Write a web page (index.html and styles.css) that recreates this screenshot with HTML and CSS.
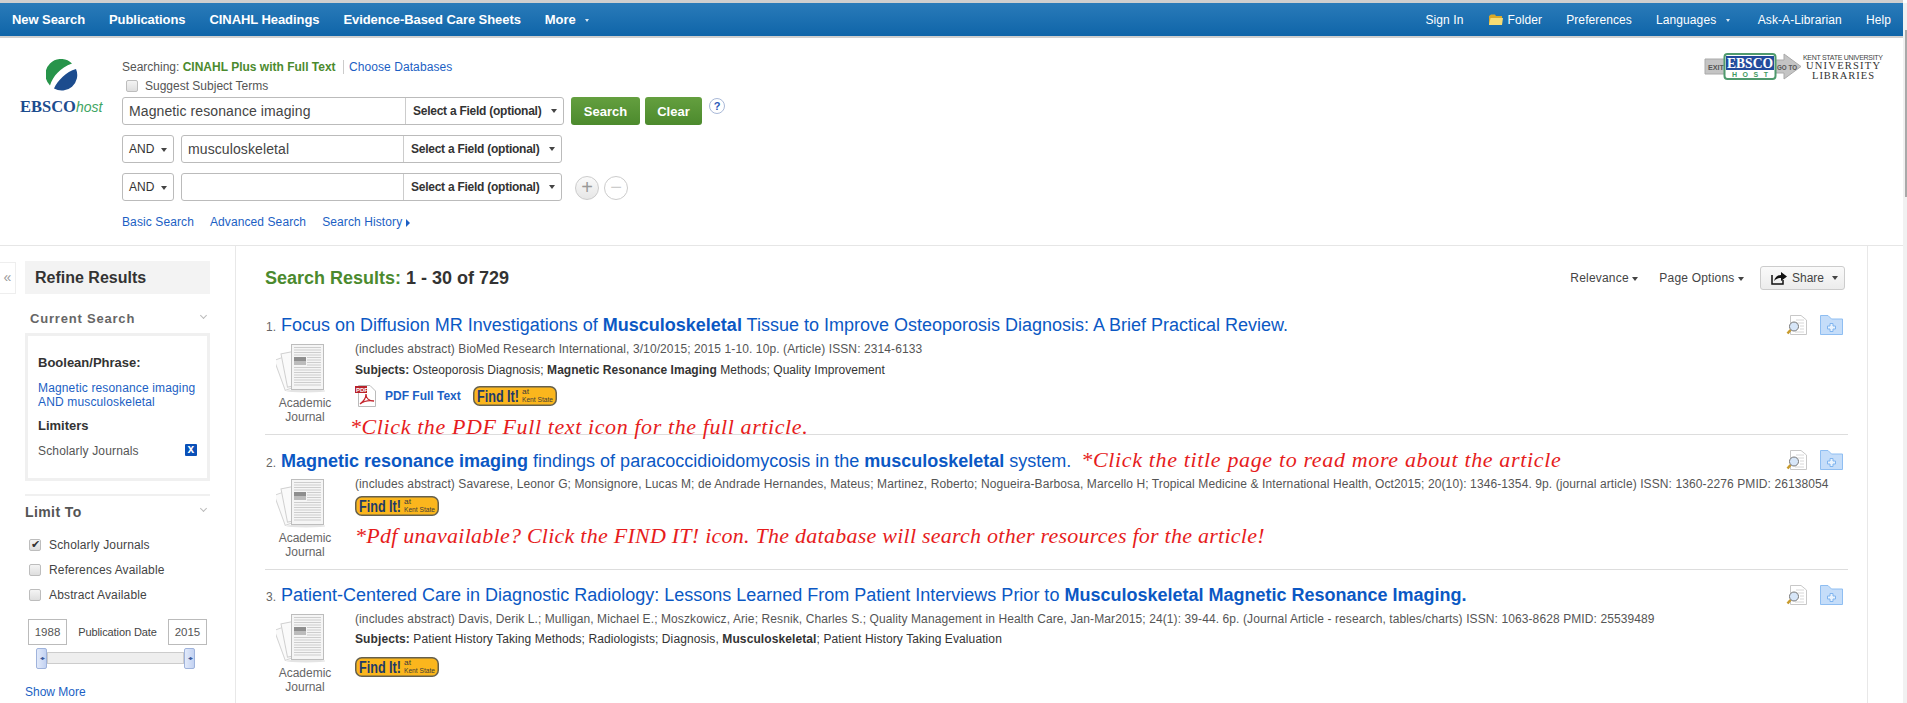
FILE: index.html
```html
<!DOCTYPE html>
<html lang="en">
<head>
    <meta charset="UTF-8">
    <title>EBSCOhost: Result List</title>
    <link rel="stylesheet" href="styles.css">
</head>
<body>

<svg class="defs" xmlns="http://www.w3.org/2000/svg">
    <symbol id="thumb" viewBox="0 0 49 49">
        <rect x="3" y="11" width="26" height="32" transform="rotate(-20 16 27)" fill="#fafafa" stroke="#d4d4d4"/>
        <rect x="8" y="7" width="26" height="34" transform="rotate(-11 21 24)" fill="#fafafa" stroke="#d0d0d0"/>
        <ellipse cx="30" cy="47" rx="20" ry="1.5" fill="#e4e4e4"/>
        <rect x="15.5" y="0.5" width="32" height="45" fill="#f5f5f5" stroke="#bdbdbd"/>
        <path d="M18 3.5H45M18 6H45M18 8.500H45M18 11H45M31 13.500H45M31 16H45M31 18.500H45M31 21H45M18 23.500H45M18 26H45M18 28.500H45M18 31H45M18 33.500H45M18 36H45M18 38.500H45M18 41H45" stroke="#cdcdcd"/>
        <rect x="18" y="13" width="12" height="4" fill="#8e8e8e"/>
        <rect x="18" y="17" width="12" height="4" fill="#bcbcbc"/>
    </symbol>
    <symbol id="preview" viewBox="0 0 21 20">
        <path d="M4.500 .5H15L20.500 5V19.500H4.500Z" fill="#fff" stroke="#c8c8c8"/>
        <path d="M10 5H18M10 8H18M14 11H18M14 14H18M9 17H18" stroke="#d8d8d8"/>
        <path d="M4.500 15L1.500 18.500" stroke="#c79a2c" stroke-width="2.500"/>
        <circle cx="8" cy="11.500" r="4.500" fill="#d7e6f8" stroke="#777"/>
    </symbol>
    <symbol id="folder-add" viewBox="0 0 23 20">
        <path d="M.5 .5H8L11.500 4H22.500V19.500H.5Z" fill="#c5ddf9" stroke="#8fbef2"/>
        <path d="M10 8.500H13V11H15.500V14H13V16.500H10V14H7.500V11H10Z" fill="#eaf3fd" stroke="#7fb4ef"/>
    </symbol>
    <symbol id="find-it" viewBox="0 0 84 20">
        <rect x=".75" y=".75" width="82.500" height="18.500" rx="6" fill="#fbb61d" stroke="#66604c" stroke-width="1.500"/>
        <text x="4" y="15.500" class="find-big" textLength="42" lengthAdjust="spacingAndGlyphs">Find It!</text>
        <text x="49" y="8" class="find-small" textLength="7" lengthAdjust="spacingAndGlyphs">at</text>
        <text x="49" y="15.500" class="find-small" textLength="31" lengthAdjust="spacingAndGlyphs">Kent State</text>
    </symbol>
</svg>

<div class="page">
<div class="content">

    <!-- Top toolbar -->
    <nav class="topbar">
        <div class="topbar-left">
            <a>New Search</a>
            <a>Publications</a>
            <a>CINAHL Headings</a>
            <a>Evidence-Based Care Sheets</a>
            <a>More <i class="nav-caret"></i></a>
        </div>
        <div class="topbar-right">
            <a>Sign In</a>
            <a class="folder-link">
                <svg width="15" height="13" viewBox="0 0 15 13"><path d="M1 3L3 1.500H7L8 3H14V12H1Z" fill="#d9a928"/><path d="M1 12L2.500 5H15L14 12Z" fill="#f7dc74"/></svg>
                Folder
            </a>
            <a>Preferences</a>
            <a>Languages <i class="nav-caret"></i></a>
            <a>Ask-A-Librarian</a>
            <a>Help</a>
        </div>
    </nav>

    <!-- Search box -->
    <header class="search-area">
        <div class="logo">
            <svg width="32" height="33" viewBox="0 0 32 33">
                <path d="M4 26.500C7 17 14 9 26 4.500A15.500 15.500 0 0 0 4 26.500Z" fill="#27944a"/>
                <path d="M30 10C20 13 12 21 8 29.500A15.500 15.500 0 0 0 30 10Z" fill="#1c4c8e"/>
            </svg>
            <div class="logo-text">EBSCO<em>host</em></div>
        </div>
        <div class="search-form">
            <div class="searching-line">
                Searching: <b>CINAHL Plus with Full Text</b>
                <a class="choose-db">Choose Databases</a>
            </div>
            <label class="suggest"><input type="checkbox"> Suggest Subject Terms</label>

            <div class="field-row">
                <div class="field-box first">
                    <input type="text" value="Magnetic resonance imaging">
                    <div class="field-select">Select a Field (optional) <i class="caret"></i></div>
                </div>
                <button class="go-btn search-btn">Search</button>
                <button class="go-btn clear-btn">Clear</button>
                <span class="help-dot">?</span>
            </div>
            <div class="field-row">
                <div class="bool-select">AND <i class="caret"></i></div>
                <div class="field-box">
                    <input type="text" value="musculoskeletal">
                    <div class="field-select">Select a Field (optional) <i class="caret"></i></div>
                </div>
            </div>
            <div class="field-row">
                <div class="bool-select">AND <i class="caret"></i></div>
                <div class="field-box">
                    <input type="text">
                    <div class="field-select">Select a Field (optional) <i class="caret"></i></div>
                </div>
                <span class="round-btn plus">+</span>
                <span class="round-btn minus">&minus;</span>
            </div>

            <div class="search-links">
                <a>Basic Search</a>
                <a>Advanced Search</a>
                <a>Search History <i class="link-arrow"></i></a>
            </div>
        </div>

        <svg class="exit-banner" width="178" height="27" viewBox="0 0 178 27">
            <path d="M0 6H20V21H0Z" fill="#c4c4c4" stroke="#aaa"/>
            <text x="3" y="17" class="banner-grey" textLength="16" lengthAdjust="spacingAndGlyphs">EXIT</text>
            <path d="M70 7H79V1L96 13.500L79 26V20H70Z" fill="#c4c4c4" stroke="#aaa"/>
            <text x="72" y="17" class="banner-grey" textLength="20" lengthAdjust="spacingAndGlyphs">GO TO</text>
            <rect x="19.500" y="1" width="51" height="25" rx="3" fill="#fff" stroke="#4f9a6d" stroke-width="2"/>
            <rect x="21" y="3" width="48" height="14" fill="#234b9c"/>
            <text x="22" y="15" class="banner-ebsco" textLength="46" lengthAdjust="spacingAndGlyphs">EBSCO</text>
            <text x="27" y="24" class="banner-host" textLength="36">HOST</text>
            <text x="98" y="7" class="banner-kent" textLength="80">KENT STATE UNIVERSITY</text>
            <text x="101" y="16" class="banner-lib" textLength="74" lengthAdjust="spacing">UNIVERSITY</text>
            <text x="107" y="26" class="banner-lib" textLength="62" lengthAdjust="spacing">LIBRARIES</text>
        </svg>
    </header>

    <div class="columns">

        <!-- Refine panel -->
        <aside class="sidebar">
            <div class="collapse-tab">&laquo;</div>
            <div class="refine">
                <h3 class="refine-title">Refine Results</h3>

                <div class="panel-head current-head">Current Search <i class="chevron"></i></div>
                <div class="current-box">
                    <div class="box-label">Boolean/Phrase:</div>
                    <a class="box-query">Magnetic resonance imaging<br>AND musculoskeletal</a>
                    <div class="box-label limiters">Limiters</div>
                    <div class="limiter-row">Scholarly Journals <span class="x-btn">x</span></div>
                </div>

                <div class="panel-rule"></div>
                <div class="panel-head limit-head">Limit To <i class="chevron"></i></div>
                <label class="limit-check first"><input type="checkbox" checked> Scholarly Journals</label>
                <label class="limit-check"><input type="checkbox"> References Available</label>
                <label class="limit-check"><input type="checkbox"> Abstract Available</label>

                <div class="date-row">
                    <span class="date-box">1988</span>
                    <span class="date-label">Publication Date</span>
                    <span class="date-box">2015</span>
                </div>
                <div class="slider">
                    <span class="slider-handle"></span>
                    <span class="slider-track"></span>
                    <span class="slider-handle"></span>
                </div>
                <a class="show-more">Show More</a>
            </div>
        </aside>

        <!-- Results -->
        <main class="results">
            <div class="results-head">
                <h1><span>Search Results:</span> 1 - 30 of 729</h1>
                <div class="results-tools">
                    <a class="sort-link">Relevance <i class="caret"></i></a>
                    <a>Page Options <i class="caret"></i></a>
                    <button class="share-btn">
                        <svg width="17" height="14" viewBox="0 0 17 14"><path d="M2 4V13H13V9" fill="none" stroke="#111" stroke-width="1.500"/><path d="M4 10C5 6 8 4 11 4V1L17 5.500L11 10V7C8 7 6 8 4 10Z" fill="#111"/></svg>
                        Share <i class="caret"></i>
                    </button>
                </div>
            </div>

            <article class="result">
                <div class="result-title">
                    <span class="result-num">1.</span>
                    <a class="title-link">Focus on Diffusion MR Investigations of <b>Musculoskeletal</b> Tissue to Improve Osteoporosis Diagnosis: A Brief Practical Review.</a>
                    <div class="result-icons">
                        <svg width="21" height="20"><use href="#preview"/></svg>
                        <svg width="23" height="20"><use href="#folder-add"/></svg>
                    </div>
                </div>
                <div class="result-body">
                    <div class="pub-type">
                        <svg width="49" height="49"><use href="#thumb"/></svg>
                        <div>Academic<br>Journal</div>
                    </div>
                    <div class="result-info">
                        <div class="meta">(includes abstract) BioMed Research International, 3/10/2015; 2015 1-10. 10p. (Article) ISSN: 2314-6133</div>
                        <div class="subjects"><b>Subjects:</b> Osteoporosis Diagnosis; <b>Magnetic Resonance Imaging</b> Methods; Quality Improvement</div>
                        <div class="links-row">
                            <svg width="21" height="22" viewBox="0 0 21 22">
                                <path d="M3.500 .5H15L20.500 6V21.500H3.500Z" fill="#fff" stroke="#bbb"/>
                                <rect x="0" y="1" width="12" height="7" fill="#b8222a"/>
                                <text x="1" y="7" class="pdf-label">PDF</text>
                                <path d="M5 19C9 16 11 12 11 9C11 13 14 16 19 16C14 15 9 16 5 19Z" fill="none" stroke="#c4262e" stroke-width="1.300"/>
                            </svg>
                            <a class="pdf-link">PDF Full Text</a>
                            <svg class="find-badge" width="84" height="20"><use href="#find-it"/></svg>
                        </div>
                        <div class="note note-one">*Click the PDF Full text icon for the full article.</div>
                    </div>
                </div>
            </article>

            <article class="result">
                <div class="result-title">
                    <span class="result-num">2.</span>
                    <a class="title-link"><b>Magnetic resonance imaging</b> findings of paracoccidioidomycosis in the <b>musculoskeletal</b> system.</a>
                    <span class="note note-inline">*Click the title page to read more about the article</span>
                    <div class="result-icons">
                        <svg width="21" height="20"><use href="#preview"/></svg>
                        <svg width="23" height="20"><use href="#folder-add"/></svg>
                    </div>
                </div>
                <div class="result-body">
                    <div class="pub-type">
                        <svg width="49" height="49"><use href="#thumb"/></svg>
                        <div>Academic<br>Journal</div>
                    </div>
                    <div class="result-info">
                        <div class="meta">(includes abstract) Savarese, Leonor G; Monsignore, Lucas M; de Andrade Hernandes, Mateus; Martinez, Roberto; Nogueira-Barbosa, Marcello H; Tropical Medicine &amp; International Health, Oct2015; 20(10): 1346-1354. 9p. (journal article) ISSN: 1360-2276 PMID: 26138054</div>
                        <svg class="find-badge-tight" width="84" height="20"><use href="#find-it"/></svg>
                        <div class="note note-two">*Pdf unavailable? Click the FIND IT! icon. The database will search other resources for the article!</div>
                    </div>
                </div>
            </article>

            <article class="result">
                <div class="result-title">
                    <span class="result-num">3.</span>
                    <a class="title-link">Patient-Centered Care in Diagnostic Radiology: Lessons Learned From Patient Interviews Prior to <b>Musculoskeletal Magnetic Resonance Imaging.</b></a>
                    <div class="result-icons">
                        <svg width="21" height="20"><use href="#preview"/></svg>
                        <svg width="23" height="20"><use href="#folder-add"/></svg>
                    </div>
                </div>
                <div class="result-body">
                    <div class="pub-type">
                        <svg width="49" height="49"><use href="#thumb"/></svg>
                        <div>Academic<br>Journal</div>
                    </div>
                    <div class="result-info">
                        <div class="meta">(includes abstract) Davis, Derik L.; Mulligan, Michael E.; Moszkowicz, Arie; Resnik, Charles S.; Quality Management in Health Care, Jan-Mar2015; 24(1): 39-44. 6p. (Journal Article - research, tables/charts) ISSN: 1063-8628 PMID: 25539489</div>
                        <div class="subjects tight"><b>Subjects:</b> Patient History Taking Methods; Radiologists; Diagnosis, <b>Musculoskeletal</b>; Patient History Taking Evaluation</div>
                        <svg class="find-badge-low" width="84" height="20"><use href="#find-it"/></svg>
                    </div>
                </div>
            </article>
        </main>
    </div>
</div>

<div class="scrollbar"><div class="scroll-thumb"></div></div>
</div>

</body>
</html>
```

FILE: styles.css
```css
html, body {
    margin: 0;
    height: 703px;
    overflow: hidden;
}

body {
    font-family: "Liberation Sans", Arial, sans-serif;
    font-size: 12px;
    color: #555;
    background-color: white;
}

a {
    color: #1c5fc4;
    text-decoration: none;
}

i {
    font-style: normal;
}

.defs {
    display: none;
}

.page {
    display: flex;
    height: 703px;
}

.content {
    width: 1903px;
}

.scrollbar {
    width: 4px;
    margin-top: 3px;
    background-color: #f1f1f1;
}

.scroll-thumb {
    width: 2px;
    height: 167px;
    margin: 27px 0 0 2px;
    background-color: #a9a9a9;
}

/* top toolbar */
.topbar {
    display: flex;
    justify-content: space-between;
    align-items: center;
    height: 33px;
    padding: 0 12px;
    border-top: 3px solid #cfcfcf;
    border-bottom: 2px solid #cfcfcf;
    background: linear-gradient(#2a7bb9, #0f65a9);
}

.topbar a {
    color: white;
}

.topbar-left, .topbar-right {
    display: flex;
    align-items: center;
    gap: 24px;
}

.topbar-left {
    font-size: 13px;
    font-weight: bold;
    letter-spacing: -.07px;
}

.topbar-right {
    letter-spacing: .1px;
}

.folder-link {
    display: flex;
    align-items: center;
    gap: 5px;
}

.nav-caret {
    display: inline-block;
    margin: 0 4px 0 6px;
    vertical-align: middle;
    border-top: 3px solid #dde9f3;
    border-left: 2.5px solid transparent;
    border-right: 2.5px solid transparent;
}

/* search area */
.search-area {
    display: flex;
    height: 208px;
    box-sizing: border-box;
    padding-top: 21px;
    border-bottom: 1px solid #e6e6e6;
}

.logo {
    width: 122px;
    flex-shrink: 0;
}

.logo svg {
    display: block;
    margin-left: 46px;
}

.logo-text {
    margin: 5px 0 0 20px;
    font-family: "Liberation Serif", serif;
    font-size: 16.5px;
    font-weight: bold;
    color: #1c4c8e;
}

.logo-text em {
    font-family: "Liberation Sans", sans-serif;
    font-size: 14px;
    font-weight: normal;
    color: #3fa564;
}

.search-form {
    padding-top: 1px;
}

.searching-line {
    line-height: 14px;
}

.searching-line b {
    color: #4b8a2e;
}

.choose-db {
    margin-left: 4px;
    padding-left: 5px;
    border-left: 1px solid #ccc;
    letter-spacing: .08px;
}

.suggest {
    display: flex;
    align-items: center;
    gap: 7px;
    margin: 5px 0 4px 4px;
    line-height: 14px;
}

input[type="checkbox"] {
    appearance: none;
    position: relative;
    width: 12px;
    height: 12px;
    margin: 0;
    border: 1px solid #bdbdbd;
    border-radius: 2px;
    background: linear-gradient(#f4f4f4, #dedede);
}

input[type="checkbox"]:checked::after {
    content: "\2714";
    position: absolute;
    left: 1px;
    top: -2px;
    font-size: 11px;
    color: #333;
}

.field-row {
    display: flex;
    align-items: center;
    height: 28px;
    margin-bottom: 10px;
}

.field-box {
    display: flex;
    width: 381px;
    height: 28px;
    box-sizing: border-box;
    border: 1px solid #bbb;
    border-radius: 3px;
}

.field-box.first {
    width: 442px;
}

.field-box input {
    flex: 1;
    min-width: 0;
    padding: 0 6px;
    border: none;
    background: none;
    outline: none;
    font-family: inherit;
    font-size: 14px;
    letter-spacing: .1px;
    color: #444;
}

.field-select {
    display: flex;
    align-items: center;
    width: 158px;
    padding-left: 7px;
    box-sizing: border-box;
    border-left: 1px solid #ccc;
    font-weight: bold;
    letter-spacing: -.25px;
    color: #333;
    white-space: pre;
}

.caret {
    display: inline-block;
    margin-left: 3px;
    vertical-align: middle;
    border-top: 4px solid #444;
    border-left: 3.5px solid transparent;
    border-right: 3.5px solid transparent;
}

.field-select .caret {
    margin-left: 6px;
}

.bool-select {
    width: 52px;
    height: 28px;
    line-height: 26px;
    box-sizing: border-box;
    margin-right: 7px;
    padding-left: 6px;
    border: 1px solid #bbb;
    border-radius: 3px;
    color: #333;
}

.go-btn {
    height: 28px;
    margin-left: 7px;
    padding: 0;
    border: none;
    border-radius: 3px;
    background: linear-gradient(#649f3f, #4c8a2d);
    color: white;
    font-family: inherit;
    font-size: 13px;
    font-weight: bold;
}

.search-btn {
    width: 69px;
}

.clear-btn {
    width: 57px;
    margin-left: 5px;
}

.help-dot {
    width: 14px;
    height: 14px;
    margin: -10px 0 0 7px;
    border: 1px solid #a9b9d8;
    border-radius: 50%;
    line-height: 14px;
    text-align: center;
    font-size: 11px;
    font-weight: bold;
    color: #2a58b8;
}

.round-btn {
    width: 22px;
    height: 22px;
    margin: 2px 0 0 7px;
    border: 1px solid #ccc;
    border-radius: 50%;
    line-height: 21px;
    text-align: center;
    font-size: 20px;
    color: #999;
    background: linear-gradient(#fafafa, #e6e6e6);
}

.round-btn.plus {
    margin-left: 13px;
}

.round-btn.minus {
    margin-left: 5px;
    color: #ccc;
    background: white;
}

.search-links {
    display: flex;
    gap: 16px;
    margin-top: 14px;
    line-height: 14px;
    letter-spacing: .1px;
}

.link-arrow {
    display: inline-block;
    border-left: 4px solid #1c5fc4;
    border-top: 4px solid transparent;
    border-bottom: 4px solid transparent;
    vertical-align: -1px;
}

.exit-banner {
    margin: -6px 20px 0 auto;
    overflow: visible;
    font-family: "Liberation Sans", sans-serif;
}

.banner-grey {
    font-size: 8px;
    font-weight: bold;
    fill: #555;
}

.banner-ebsco {
    font-family: "Liberation Serif", serif;
    font-size: 15px;
    font-weight: bold;
    fill: white;
}

.banner-host {
    font-size: 7px;
    font-weight: bold;
    fill: #3f9a62;
}

.banner-kent {
    font-size: 7px;
    fill: #444;
}

.banner-lib {
    font-family: "Liberation Serif", serif;
    font-size: 10.5px;
    fill: #333;
}

/* columns under the search box */
.columns {
    display: flex;
    height: 457px;
}

.sidebar {
    display: flex;
    width: 235px;
    flex-shrink: 0;
    box-sizing: border-box;
    padding-top: 15px;
}

.collapse-tab {
    width: 15px;
    height: 30px;
    margin: 1px 9px 0 0;
    border: 1px solid #eee;
    border-left: none;
    line-height: 28px;
    text-align: center;
    font-size: 14px;
    color: #999;
}

.refine {
    width: 185px;
}

.refine-title {
    height: 33px;
    margin: 0;
    padding-left: 10px;
    line-height: 33px;
    background-color: #f3f3f3;
    font-size: 16px;
    color: #333;
}

.panel-head {
    display: flex;
    justify-content: space-between;
    line-height: 14px;
    font-weight: bold;
    color: #666;
}

.current-head {
    margin: 18px 0 7px;
    padding-left: 5px;
    font-size: 13px;
    letter-spacing: .8px;
}

.limit-head {
    margin-top: 9px;
    font-size: 14px;
    letter-spacing: .4px;
    color: #555;
}

.chevron {
    width: 4px;
    height: 4px;
    margin: 1px 4px 0 0;
    border-right: 1px solid #bbb;
    border-bottom: 1px solid #bbb;
    transform: rotate(45deg);
}

.current-box {
    height: 148px;
    box-sizing: border-box;
    padding: 20px 10px 0;
    border: 3px solid #f0f0f0;
    line-height: 14px;
}

.box-label {
    font-weight: bold;
    font-size: 13px;
    color: #333;
}

.box-query {
    display: block;
    margin-top: 11px;
    letter-spacing: .15px;
    white-space: nowrap;
}

.limiters {
    margin-top: 10px;
}

.limiter-row {
    display: flex;
    justify-content: space-between;
    margin-top: 11px;
    letter-spacing: .15px;
}

.x-btn {
    width: 12px;
    height: 12px;
    border-radius: 1px;
    background-color: #0a50b8;
    color: white;
    font-weight: bold;
    line-height: 11px;
    text-align: center;
}

.panel-rule {
    height: 2px;
    margin-top: 13px;
    background-color: #f0f0f0;
}

.limit-check {
    display: flex;
    align-items: center;
    gap: 8px;
    margin: 11px 0 0 4px;
    line-height: 14px;
    letter-spacing: .15px;
    color: #444;
}

.limit-check.first {
    margin-top: 19px;
}

.date-row {
    display: flex;
    justify-content: space-between;
    align-items: center;
    margin: 17px 3px 3px;
}

.date-box {
    width: 39px;
    height: 26px;
    box-sizing: border-box;
    border: 1px solid #bbb;
    line-height: 25px;
    text-align: center;
    font-size: 11.5px;
}

.date-label {
    font-size: 11px;
    letter-spacing: -.1px;
    color: #444;
}

.slider {
    display: flex;
    align-items: center;
    width: 159px;
    height: 20px;
    margin-left: 11px;
}

.slider-track {
    flex: 1;
    height: 10px;
    border: 1px solid #ccc;
    background-color: #eee;
}

.slider-handle {
    width: 9px;
    height: 19px;
    border: 1px solid #9fb3dc;
    border-radius: 2px;
    background: linear-gradient(90deg, #e2eafa, #c3d2f2);
    line-height: 18px;
    text-align: center;
    font-size: 6px;
    letter-spacing: -1px;
    color: #3d5a99;
}

.slider-handle::before {
    content: "\25C2\25B8";
}

.show-more {
    display: block;
    margin-top: 17px;
    line-height: 14px;
}

/* results */
.results {
    flex: 1;
    margin-right: 35px;
    padding: 20px 19px 0 29px;
    border-left: 1px solid #e8e8e8;
    border-right: 1px solid #e8e8e8;
}

.results-head {
    display: flex;
    justify-content: space-between;
    align-items: center;
    height: 24px;
    margin-bottom: 10px;
}

.results-head h1 {
    margin: 0;
    font-size: 18px;
    color: #333;
}

.results-head h1 span {
    color: #4b8a2e;
}

.results-tools {
    display: flex;
    align-items: center;
    gap: 16px;
    margin-right: 3px;
}

.results-tools a {
    letter-spacing: .2px;
    color: #444;
}

.results-tools .caret {
    margin-left: 0;
}

.sort-link {
    margin-right: 5px;
}

.share-btn {
    display: flex;
    align-items: center;
    gap: 5px;
    width: 85px;
    height: 24px;
    padding: 0 0 0 9px;
    border: 1px solid #ccc;
    border-radius: 3px;
    background: linear-gradient(#fafafa, #ececec);
    font-family: inherit;
    font-size: 12px;
    color: #444;
}

.share-btn .caret {
    margin-left: 3px;
}

.result {
    height: 135px;
    box-sizing: border-box;
    padding-top: 15px;
    border-bottom: 1px solid #ddd;
}

.result:last-child {
    border-bottom: none;
}

.result-title {
    display: flex;
    align-items: baseline;
    height: 20px;
}

.result-num {
    width: 15px;
    margin-left: 1px;
    flex-shrink: 0;
    color: #666;
}

.title-link {
    font-size: 18px;
    line-height: 20px;
    color: #0b58c4;
    white-space: nowrap;
}

.result-icons {
    display: flex;
    gap: 13px;
    align-self: flex-start;
    margin: 0 5px 0 auto;
}

.result-body {
    display: flex;
    margin-top: 7px;
}

.pub-type {
    width: 80px;
    padding-top: 2px;
    flex-shrink: 0;
    text-align: center;
    line-height: 13.5px;
    color: #666;
}

.pub-type svg {
    display: block;
    margin: 0 0 4px 11px;
}

.result-info {
    margin-left: 10px;
    min-width: 0;
    white-space: nowrap;
}

.meta {
    line-height: 14px;
    letter-spacing: .1px;
}

.subjects {
    margin-top: 7px;
    line-height: 14px;
    letter-spacing: .04px;
    color: #333;
}

.subjects.tight {
    margin-top: 6px;
    letter-spacing: .1px;
}

.links-row {
    display: flex;
    align-items: center;
    height: 20px;
    margin-top: 9px;
}

.pdf-link {
    margin-left: 9px;
    font-weight: bold;
}

.find-badge {
    margin-left: 12px;
}

.find-badge-tight {
    display: block;
    margin-top: 5px;
}

.find-badge-low {
    display: block;
    margin-top: 11px;
}

.find-big {
    font-family: "Liberation Sans", sans-serif;
    font-size: 16px;
    font-weight: bold;
    fill: #1e3a68;
}

.find-small {
    font-family: "Liberation Sans", sans-serif;
    font-size: 8px;
    fill: #3b3b3b;
}

.pdf-label {
    font-family: "Liberation Sans", sans-serif;
    font-size: 6px;
    font-weight: bold;
    fill: white;
}

.note {
    font-family: "Liberation Serif", serif;
    font-style: italic;
    font-size: 22px;
    line-height: 22px;
    color: #e61c1c;
    white-space: nowrap;
}

.note-one {
    margin: 10px 0 0 -5px;
    letter-spacing: .6px;
}

.note-two {
    margin-top: 9px;
    letter-spacing: .25px;
}

.note-inline {
    margin-left: 10px;
    line-height: 20px;
    letter-spacing: .65px;
}
```
